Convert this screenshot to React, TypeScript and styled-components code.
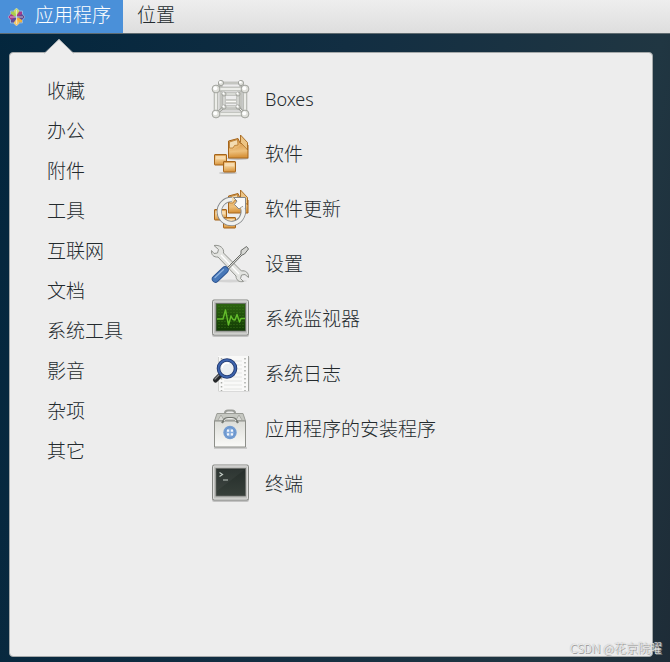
import React from "react";
import styled, { createGlobalStyle, css } from "styled-components";

const Global = createGlobalStyle`
  * { box-sizing: border-box; }
  body { margin: 0; }
  button { font: inherit; color: inherit; background: none; border: 0; cursor: pointer; }
`;

const Desktop = styled.div`
  position: relative;
  display: flex;
  flex-direction: column;
  min-height: 100vh;
  padding-bottom: 5px;
  font-family: "Noto Sans", "Noto Sans CJK SC", sans-serif;
  font-size: 19px;
  font-weight: 300;
  line-height: 28px;
  color: #232a2d;
  background: linear-gradient(100deg, #03263d 0%, #122e42 45%, #203642 85%, #1e2c37 100%);
`;

const TopBar = styled.nav`
  display: flex;
  height: 34px;
  background: linear-gradient(#eeeeee, #dedede);
  border-bottom: 1px solid #5f6b70;
`;

const MenuButton = styled.button<{ $active?: boolean }>`
  display: flex;
  align-items: center;
  gap: 10px;
  padding: 0 12px 4px 14px;
  white-space: nowrap;
  ${(p) =>
    p.$active &&
    css`
      padding-left: 8px;
      background: #4a90d9;
      color: #ffffff;
    `}
`;

const DistroIcon = styled.svg`
  flex: none;
  margin-top: 4px;
`;

const Pointer = styled.svg`
  position: relative;
  z-index: 1;
  flex: none;
  width: 30px;
  height: 15px;
  margin: 5px 0 -2px 44px;
`;

const Panel = styled.main`
  flex: 1;
  display: grid;
  grid-template-columns: 160px 1fr;
  align-items: start;
  margin: 0 17px 0 9px;
  padding: 18px 24px 18px 37px;
  background: #ededed;
  border: 1px solid #a5a9aa;
  border-radius: 4px;
`;

const List = styled.ul`
  margin: 0;
  padding: 0;
  list-style: none;
`;

const Category = styled.button`
  display: block;
  width: 100%;
  height: 40px;
  padding: 0;
  text-align: left;
`;

const AppItem = styled.button`
  display: flex;
  align-items: center;
  gap: 15px;
  width: 100%;
  height: 55px;
  padding: 0 0 0 3px;
  text-align: left;
`;

const LatinName = styled.span`
  font-size: 18px;
`;

const Watermark = styled.footer`
  position: absolute;
  right: 8px;
  bottom: 4px;
  font-family: "Noto Sans CJK SC", sans-serif;
  font-size: 12px;
  line-height: 20px;
  color: #f4f4f4;
  text-shadow: 1px 1px 0 #949494, 0 0 1px #8f8f8f;
`;

const icon = { width: 40, height: 40, viewBox: "0 0 40 40", "aria-hidden": true } as const;

const Distro = () => (
  <DistroIcon width="17" height="18" viewBox="0 0 17 18" aria-hidden="true">
    <path d="M3 3.500h5v5H3z" fill="#a9cf4f" />
    <path d="M9 3.500h5v5H9z" fill="#a5398c" />
    <path d="M3 9.500h5v5H3z" fill="#5f4a98" />
    <path d="M9 9.500h5v5H9z" fill="#efb13c" />
    <path d="M8.500 0l3 3-3 4.500-3-4.500z" fill="#cbdc62" />
    <path d="M8.500 18l3-3-3-4.500-3 4.500z" fill="#f3c767" />
    <path d="M0 9l3-3 4.500 3L3 12z" fill="#a5398c" />
    <path d="M17 9l-3-3-4.500 3 4.500 3z" fill="#5c4a90" />
    <path d="M8.500 0l3 3h3v3l2.500 3-2.500 3v3h-3l-3 3-3-3h-3v-3L0 9l2.500-3V3h3z" fill="none" stroke="#e6dfe4" strokeWidth=".6" opacity=".7" />
    <path d="M8.500 2v14M2 9h13" stroke="#f0e9e6" strokeWidth=".7" />
  </DistroIcon>
);

const bars: [string, number][] = [
  ["M14 15H28V28H14Z", 3],
  ["M11 4H31V30H11Z", 2.6],
  ["M6 10L11 4M35 10L31 4M6 35L14 28M35 35L28 28", 2.6],
  ["M6 10H35V35H6Z", 4.4],
];

const Boxes = () => (
  <svg {...icon}>
    {bars.map(([d, w]) => (
      <g key={d} fill="none">
        <path d={d} stroke="#9a9c96" strokeWidth={w} />
        <path d={d} stroke="#ecede9" strokeWidth={w - 1.6} />
      </g>
    ))}
    <path d="M16 22.500H26" stroke="#a1a39c" strokeWidth="4" />
    <path d="M16 22.500H26" stroke="#fafaf7" strokeWidth="2" />
    {[[11, 4, 2.6], [31, 4, 2.6], [14, 15, 2], [28, 15, 2], [14, 28, 2], [28, 28, 2], [6, 10, 3.9], [35, 10, 3.9], [6, 35, 3.9], [35, 35, 3.9]].map(([x, y, r]) => (
      <g key={`${x}-${y}`}>
        <circle cx={x} cy={y} r={r} fill="#dfe0db" stroke="#9a9c96" strokeWidth=".9" />
        <circle cx={x - 0.7} cy={y - 0.8} r={r / 2} fill="#fff" />
      </g>
    ))}
  </svg>
);

const Carton = () => (
  <g stroke="#a5651b" strokeLinejoin="round">
    <path d="M18.500 7L28 4.500L30 9L38 11V24H18.500Z" fill="url(#carton)" />
    <path d="M19.500 8L27.500 5.500L28 11L24.500 11.500L23 14L19.500 14Z" fill="#f3dcb2" stroke="#b97a2c" strokeWidth=".8" />
    <path d="M30.500 1L37.500 8.500V16L30.500 8.500Z" fill="#edc483" strokeWidth=".9" />
    <path d="M29 12.500L31.500 10L37 16V23H19.500V16L24 15Z" fill="url(#carton)" stroke="none" />
  </g>
);

const SmallCarton = ({ x, y }: { x: number; y: number }) => (
  <g>
    <rect x={x + 0.5} y={y + 0.5} width="12" height="10.500" rx=".5" fill="url(#carton)" stroke="#a5651b" />
    <path d={`M${x + 1.5} ${y + 2}h10v3.500h-10z`} fill="#fbe6c0" opacity=".8" />
  </g>
);

const CartonFill = () => (
  <defs>
    <linearGradient id="carton" x1="0" y1="0" x2="0.1" y2="1">
      <stop offset="0" stopColor="#d99a4b" />
      <stop offset=".6" stopColor="#edc07c" />
      <stop offset="1" stopColor="#d9963f" />
    </linearGradient>
  </defs>
);

const Software = () => (
  <svg {...icon}>
    <CartonFill />
    <ellipse cx="28" cy="24.500" rx="11" ry="1.500" fill="#000" opacity=".2" />
    <ellipse cx="18" cy="39" rx="9" ry="1" fill="#000" opacity=".2" />
    <Carton />
    <SmallCarton x={4} y={20} />
    <SmallCarton x={13} y={27} />
  </svg>
);

const Update = () => (
  <svg {...icon}>
    <CartonFill />
    <Carton />
    <SmallCarton x={4} y={20} />
    <SmallCarton x={13} y={28} />
    <path d="M22 10.500A12 12 0 1 0 33 20" fill="none" stroke="#85888b" strokeWidth="5.200" />
    <path d="M23.500 8.500H35.500V20.500L32.500 17.500L29 20L24.500 15.500L27 12Z" fill="#fafaf9" stroke="#85888b" strokeWidth="1" strokeLinejoin="round" />
    <path d="M22 10.500A12 12 0 1 0 32.500 18" fill="none" stroke="#f0f1ef" strokeWidth="3.600" />
  </svg>
);

const Settings = () => (
  <svg {...icon}>
    <ellipse cx="20" cy="37" rx="17" ry="1.500" fill="#000" opacity=".1" />
    <path
      d="M4 1.500L8.500 5.500L7.500 9L4 9.500L1.500 6.500C1 10.500 3.500 13.500 8 13L26 32C26 36 29 38.500 33.500 37.500L30.500 34.500L31.500 31L35 30.500L38.500 33.500C39 29 35.500 26 31.500 27L13.500 9C14.500 4 9.500 .5 4 1.500Z"
      fill="#e3e4e1"
      stroke="#92948f"
      strokeLinejoin="round"
    />
    <path d="M11 11L29 30" stroke="#fff" strokeWidth="1.300" />
    <path d="M17 24L31 10L31 6.500L36.500 2.500L38.500 5L34.500 10L32 11L18.500 25Z" fill="#d7d8d5" stroke="#6a6c68" strokeLinejoin="round" />
    <path d="M15 26L5.500 35" stroke="#2a5290" strokeWidth="7.400" strokeLinecap="round" />
    <path d="M15 26L5.500 35" stroke="#4878b8" strokeWidth="5.800" strokeLinecap="round" />
    <path d="M13.500 25.500L5 33.500" stroke="#8fb3df" strokeWidth="1.200" strokeLinecap="round" />
  </svg>
);

const Screen = ({ light, dark, id, children }: { light: string; dark: string; id: string; children: React.ReactNode }) => (
  <svg {...icon}>
    <defs>
      <linearGradient id={id} x1="0" y1="0" x2="0" y2="1">
        <stop offset="0" stopColor={light} />
        <stop offset="1" stopColor={dark} />
      </linearGradient>
    </defs>
    <rect x="2" y="2" width="37" height="36" rx="2" fill="#000" opacity=".18" />
    <rect x="2.500" y="1" width="36" height="35" rx="1.500" fill="#c0c1be" stroke="#858783" />
    <rect x="3.500" y="2" width="34" height="33" rx="1" fill="none" stroke="#dededd" />
    <rect x="6" y="4.500" width="29.500" height="27.500" fill={`url(#${id})`} stroke="#686a67" strokeWidth=".8" />
    {children}
  </svg>
);

const Monitor = () => (
  <Screen id="monitor" light="#2d6411" dark="#123b04">
    <path
      d="M9 7V31M12 7V31M15 7V31M18 7V31M21 7V31M24 7V31M27 7V31M30 7V31M33 7V31"
      stroke="#4a8821"
      strokeWidth=".8"
      strokeDasharray=".8 2.200"
    />
    <path
      d="M7 20H13L15.500 11L18.500 26L21 17L23 20.500L25 21L27 15.500L29.500 23L31 19.500H35"
      fill="none"
      stroke="#63bd2b"
      strokeWidth="1.400"
      strokeLinejoin="round"
    />
  </Screen>
);

const Terminal = () => (
  <Screen id="terminal" light="#252d2a" dark="#37403a">
    <path d="M7 5.500H35L7 27Z" fill="#fff" opacity=".04" />
    <path d="M9.500 8.500L12.500 10.500L9.500 12.500M13 16H18" fill="none" stroke="#c4ccc6" strokeWidth="1.200" />
  </Screen>
);

const Log = () => (
  <svg {...icon}>
    <rect x="8.500" y="3" width="31" height="35" fill="#000" opacity=".08" />
    <rect x="8" y="2" width="30" height="35" fill="#f9f9f8" />
    <path d="M38.500 2V37" stroke="#a6a8a4" />
    <path d="M8.500 3V37" stroke="#c8c9c6" strokeWidth=".8" />
    <path d="M14 7H32M14 11H32M14 15H32M14 19H32M14 23H32M14 27H32M14 31H32M14 35H32" stroke="#e4e5e3" />
    <path d="M11.500 4V37M35 4V37" stroke="#aaaca8" strokeWidth="1.500" strokeDasharray="1.500 2.500" />
    <path d="M10.500 21L5.500 26" stroke="#252729" strokeWidth="5" strokeLinecap="round" />
    <path d="M9 21L5 25" stroke="#878a8c" strokeWidth="1.200" strokeLinecap="round" />
    <circle cx="17" cy="14.500" r="8.500" fill="#e9edf1" fillOpacity=".9" stroke="#20386f" strokeWidth="3.600" />
    <circle cx="17" cy="14.500" r="8.500" fill="none" stroke="#3d64ad" strokeWidth="1.800" />
    <path d="M12 14A5 5 0 0 1 19 9.500" fill="none" stroke="#fff" strokeWidth="1.500" />
  </svg>
);

const Installer = () => (
  <svg {...icon}>
    <defs>
      <linearGradient id="bag" x1="0" y1="0" x2="0" y2="1">
        <stop offset="0" stopColor="#dcddd8" />
        <stop offset="1" stopColor="#fafaf8" />
      </linearGradient>
    </defs>
    <path d="M4 39H37" stroke="#000" strokeWidth="1.500" opacity=".18" />
    <path d="M15 7V4Q15 1.500 18 1.500H22Q25 1.500 25 4V7" fill="none" stroke="#9b9d98" strokeWidth="2" />
    <path d="M4.500 12L7 4.500H33L35.500 12Z" fill="#c6c8c2" stroke="#9b9d97" />
    <path d="M8 11L11 6L14 11M32 11L29 6L26 11" fill="#d8d9d5" stroke="#9fa19b" strokeWidth=".8" />
    <path d="M4.500 12H35.500V38H4.500Z" fill="url(#bag)" stroke="#8d8f89" />
    <path d="M12 14L14 11Q15 9 18 9H22Q25 9 26 11L28 14" fill="none" stroke="#747771" strokeWidth="2.200" />
    <path d="M14 12Q15 9.500 18 9.500H22Q25 9.500 26 12" fill="none" stroke="#e9e9e6" />
    <circle cx="20" cy="23.500" r="6.700" fill="#739dd2" />
    <circle cx="20" cy="23.500" r="4.800" fill="#84abdc" stroke="#628dc5" strokeWidth=".7" />
    <path d="M17 20.500h2.200v2.200H17zM20.800 20.500H23v2.200h-2.200zM17 24.300h2.200v2.200H17zM20.800 24.300H23v2.200h-2.200z" fill="#f3f7fc" />
  </svg>
);

const categories = ["收藏", "办公", "附件", "工具", "互联网", "文档", "系统工具", "影音", "杂项", "其它"];

const apps: { name: React.ReactNode; id: string; Icon: React.FC }[] = [
  { id: "boxes", name: <LatinName>Boxes</LatinName>, Icon: Boxes },
  { id: "software", name: "软件", Icon: Software },
  { id: "update", name: "软件更新", Icon: Update },
  { id: "settings", name: "设置", Icon: Settings },
  { id: "monitor", name: "系统监视器", Icon: Monitor },
  { id: "log", name: "系统日志", Icon: Log },
  { id: "installer", name: "应用程序的安装程序", Icon: Installer },
  { id: "terminal", name: "终端", Icon: Terminal },
];

export default function App() {
  return (
    <Desktop lang="zh-CN">
      <Global />
      <TopBar>
        <MenuButton $active aria-expanded="true">
          <Distro />
          应用程序
        </MenuButton>
        <MenuButton>位置</MenuButton>
      </TopBar>
      <Pointer viewBox="0 0 30 15" aria-hidden="true">
        <path d="M0 15L15 0L30 15Z" fill="#ededed" />
        <path d="M0 14.500L15 .5L30 14.500" fill="none" stroke="#b5b8b9" strokeWidth=".8" />
      </Pointer>
      <Panel>
        <List>
          {categories.map((name) => (
            <li key={name}>
              <Category>{name}</Category>
            </li>
          ))}
        </List>
        <List>
          {apps.map(({ id, name, Icon }) => (
            <li key={id}>
              <AppItem>
                <Icon />
                <span>{name}</span>
              </AppItem>
            </li>
          ))}
        </List>
      </Panel>
      <Watermark>CSDN @花京院曜</Watermark>
    </Desktop>
  );
}
